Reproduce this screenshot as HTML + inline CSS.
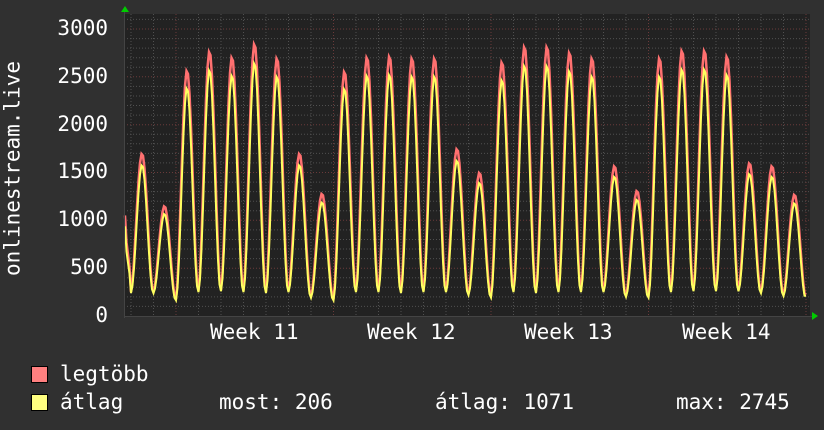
<!DOCTYPE html>
<html><head><meta charset="utf-8"><style>
body{margin:0;background:#303030;width:824px;height:430px;overflow:hidden;font-family:"DejaVu Sans Mono","Liberation Mono",monospace;color:#fff}
.t{position:absolute;font-size:21px;line-height:21px;white-space:pre}
.sq{position:absolute;width:15px;height:15px;border:1px solid #000}
</style></head><body>
<svg id="g" width="824" height="430" style="position:absolute;left:0;top:0"></svg>
<div class="t" style="width:220px;left:-97px;top:158px;text-align:center;transform:rotate(-90deg);transform-origin:center">onlinestream.live</div>
<div class="t" style="left:30px;top:18px;width:78px;text-align:right">3000</div>
<div class="t" style="left:30px;top:66px;width:78px;text-align:right">2500</div>
<div class="t" style="left:30px;top:114px;width:78px;text-align:right">2000</div>
<div class="t" style="left:30px;top:161px;width:78px;text-align:right">1500</div>
<div class="t" style="left:30px;top:209px;width:78px;text-align:right">1000</div>
<div class="t" style="left:30px;top:257px;width:78px;text-align:right">500</div>
<div class="t" style="left:30px;top:305px;width:78px;text-align:right">0</div>
<div class="t" style="left:210px;top:322px">Week 11</div>
<div class="t" style="left:367px;top:322px">Week 12</div>
<div class="t" style="left:524px;top:322px">Week 13</div>
<div class="t" style="left:682px;top:322px">Week 14</div>
<div class="sq" style="left:31px;top:366px;background:#ff8080"></div>
<div class="sq" style="left:31px;top:394px;background:#ffff80"></div>
<div class="t" style="left:60px;top:364px">legtöbb</div>
<div class="t" style="left:60px;top:392px">átlag</div>
<div class="t" style="left:219px;top:392px">most: 206</div>
<div class="t" style="left:435px;top:392px">átlag: 1071</div>
<div class="t" style="left:676px;top:392px">max: 2745</div>
<script>
var s='',X0=124,X1=810,Y0=14,Y1=316;
s+='<rect x="'+X0+'" y="'+Y0+'" width="'+(X1-X0)+'" height="'+(Y1-Y0)+'" fill="#222"/>';
function y(v){return 316-v*287/3000;}
for(var v=100;v<=3100;v+=100){var yy=y(v);if(yy<Y0)break;var maj=v%500==0;
s+='<line x1="'+X0+'" x2="'+X1+'" y1="'+yy.toFixed(1)+'" y2="'+yy.toFixed(1)+'" stroke="'+(maj?'#6a3a3a':'#505050')+'" stroke-dasharray="1,2"/>';}
for(var i=0;i<31;i++){var xx=131+i*22.5;if(xx>X1)break;var maj=((i-2)%7==0);
s+='<line y1="'+Y0+'" y2="'+Y1+'" x1="'+xx.toFixed(1)+'" x2="'+xx.toFixed(1)+'" stroke="'+(maj?'#6a3a3a':'#505050')+'" stroke-dasharray="1,2"/>';}
var pk=[1700,1150,2570,2770,2710,2850,2700,1700,1280,2560,2710,2720,2700,2700,1750,1500,2660,2820,2820,2760,2700,1570,1310,2700,2780,2780,2720,1600,1570,1270];
var mn=[250,170,260,270,260,250,260,200,170,260,260,250,260,260,230,200,260,250,260,260,260,210,200,260,270,270,270,250,220,190];
var r='',yl='';
for(var x=125;x<=806;x+=1.5){var d=(x-142)/22.5;var i=Math.round(d);var t=d-i;
if(i<0){i=0;}if(i>29)i=29;
var lo=mn[Math.min(29,Math.max(0,t<0?i-1:i))]||250;
var f=Math.pow(Math.max(0,Math.cos(Math.PI*Math.min(0.5,Math.abs(t)))),1.8);
if(x<131)f=Math.max(f,0.45-(x-125)*0.06);
var v=lo+(pk[i]-lo)*f;var a=lo*0.95+(pk[i]*0.93-lo*0.95)*Math.pow(f,1.1);
r+=(r?'L':'M')+x.toFixed(1)+','+y(v).toFixed(1);yl+=(yl?'L':'M')+x.toFixed(1)+','+y(a).toFixed(1);}
s+='<path d="'+r+'" fill="none" stroke="#ff7070" stroke-width="2.5"/>';
s+='<path d="'+yl+'" fill="none" stroke="#ffff60" stroke-width="2"/>';
s+='<line x1="124" x2="812" y1="316.5" y2="316.5" stroke="#444"/><line x1="124.5" x2="124.5" y1="10" y2="318" stroke="#444"/>';
s+='<polygon points="121,12 125,6 129,12" fill="#0c0"/><polygon points="812,312 818,316 812,320" fill="#0c0"/>';
document.getElementById('g').innerHTML=s;
</script>
</body></html>
